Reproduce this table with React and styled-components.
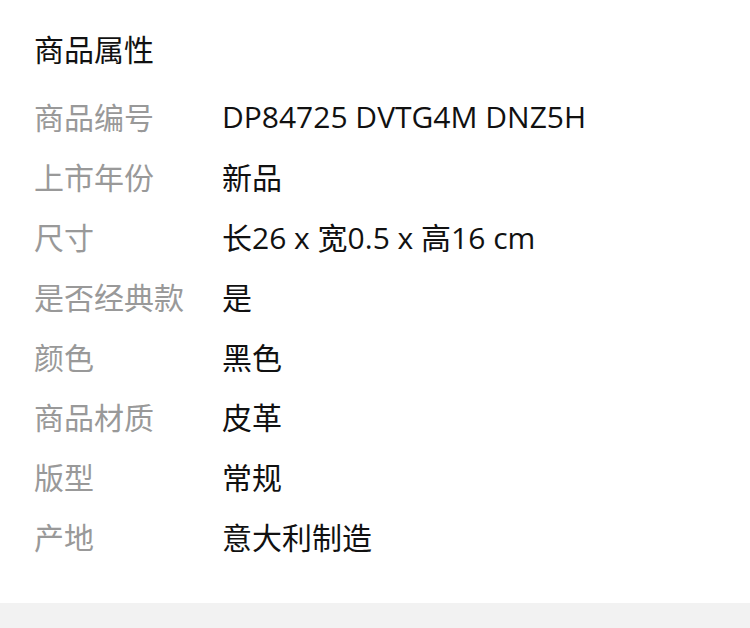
import React from 'react';
import styled, {createGlobalStyle} from 'styled-components';

const GlobalStyle = createGlobalStyle`
    html, body {
        margin: 0;
        padding: 0;
        background: #fff;
    }
    body {
        font-family: "Open Sans", "Noto Sans CJK SC", sans-serif;
    }
`;

const Page = styled.div`
    width: 750px;
    min-height: 628px;
    display: flex;
    flex-direction: column;
    background: #fff;
`;

const Section = styled.section`
    padding: 18px 0 37px 34px;
`;

const Title = styled.h2`
    margin: 0 0 8px 0;
    height: 60px;
    display: flex;
    align-items: center;
    font-size: 30px;
    font-weight: 400;
    color: #111;
`;

const AttrList = styled.dl`
    margin: 0;
`;

const AttrRow = styled.div`
    display: grid;
    grid-template-columns: 188px 1fr;
    height: 60px;
    align-items: center;
`;

const Label = styled.dt`
    margin: 0;
    font-size: 30px;
    color: #999;
    white-space: nowrap;
`;

const Value = styled.dd`
    margin: 0;
    font-size: 30px;
    color: #111;
    white-space: nowrap;
`;

const Footer = styled.div`
    flex: 1;
    background: #f2f2f2;
`;

const attrs = [
    ['商品编号', 'DP84725 DVTG4M DNZ5H'],
    ['上市年份', '新品'],
    ['尺寸', '长26 x 宽0.5 x 高16 cm'],
    ['是否经典款', '是'],
    ['颜色', '黑色'],
    ['商品材质', '皮革'],
    ['版型', '常规'],
    ['产地', '意大利制造'],
];

export default function App() {
    return (
        <Page>
            <GlobalStyle/>
            <Section>
                <Title>商品属性</Title>
                <AttrList>
                    {attrs.map(([k, v]) => (
                        <AttrRow key={k}>
                            <Label>{k}</Label>
                            <Value>{v}</Value>
                        </AttrRow>
                    ))}
                </AttrList>
            </Section>
            <Footer/>
        </Page>
    );
}
